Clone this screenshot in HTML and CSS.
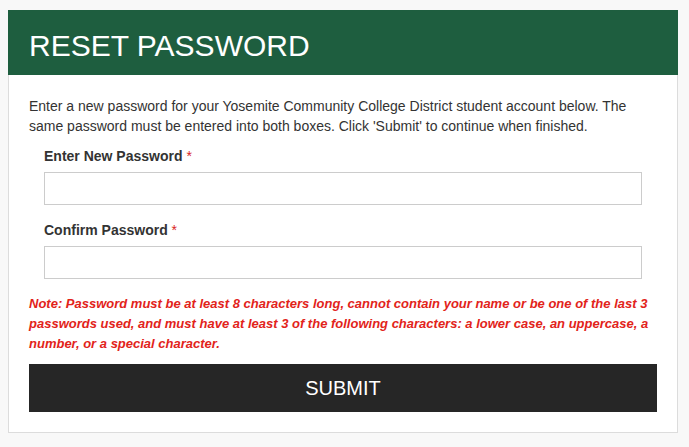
FILE: index.html
```html
<!DOCTYPE html>
<html>
<head>
<meta charset="utf-8">
<link rel="stylesheet" href="styles.css">
</head>
<body>
<div class="card">
  <div class="card-header">
    <h1 class="title">RESET PASSWORD</h1>
  </div>
  <div class="card-body">
    <p class="intro">Enter a new password for your Yosemite Community College District student account below. The same password must be entered into both boxes. Click 'Submit' to continue when finished.</p>
    <div class="form-group first">
      <label class="label">Enter New Password <span class="req">*</span></label>
      <input class="input" type="password">
    </div>
    <div class="form-group">
      <label class="label">Confirm Password <span class="req">*</span></label>
      <input class="input" type="password">
    </div>
    <p class="note">Note: Password must be at least 8 characters long, cannot contain your name or be one of the last 3 passwords used, and must have at least 3 of the following characters: a lower case, an uppercase, a number, or a special character.</p>
    <button class="submit" type="button">SUBMIT</button>
  </div>
</div>
</body>
</html>
```

FILE: styles.css
```css
html, body {
  background: #f8f8f8;
}
body {
  margin: 10px 0 0 8px;
  font-family: "Liberation Sans", Arial, sans-serif;
  color: #333;
}
.card {
  width: 670px;
}
.card-header {
  background: #1e5e3f;
  padding: 19px 21px 12px;
}
.title {
  margin: 0;
  font-size: 30px;
  line-height: 34px;
  font-weight: normal;
  color: #fff;
}
.card-body {
  background: #fff;
  border: 1px solid #dcdcdc;
  border-top: none;
  padding: 21px 20px 20px;
}
.intro {
  margin: 0;
  font-size: 14px;
  line-height: 20px;
  color: #333;
}
.form-group {
  margin: 15px 15px 0;
  display: flex;
  flex-direction: column;
}
.form-group.first {
  margin-top: 10px;
}
.label {
  font-size: 14px;
  line-height: 20px;
  font-weight: bold;
  color: #333;
  margin-bottom: 6px;
}
.req {
  color: #d9251d;
  font-weight: normal;
}
.input {
  box-sizing: border-box;
  height: 33px;
  width: 100%;
  margin: 0;
  border: 1px solid #cccccc;
  border-radius: 0;
  background: #fff;
  padding: 6px 12px;
}
.note {
  margin: 15px 0 0;
  font-size: 13px;
  line-height: 20px;
  font-weight: bold;
  font-style: italic;
  color: #e2231a;
}
.submit {
  display: block;
  width: 100%;
  height: 48px;
  margin-top: 10px;
  border: none;
  background: #262626;
  color: #fff;
  font-family: "Liberation Sans", Arial, sans-serif;
  font-size: 20px;
  padding: 0;
}
```
